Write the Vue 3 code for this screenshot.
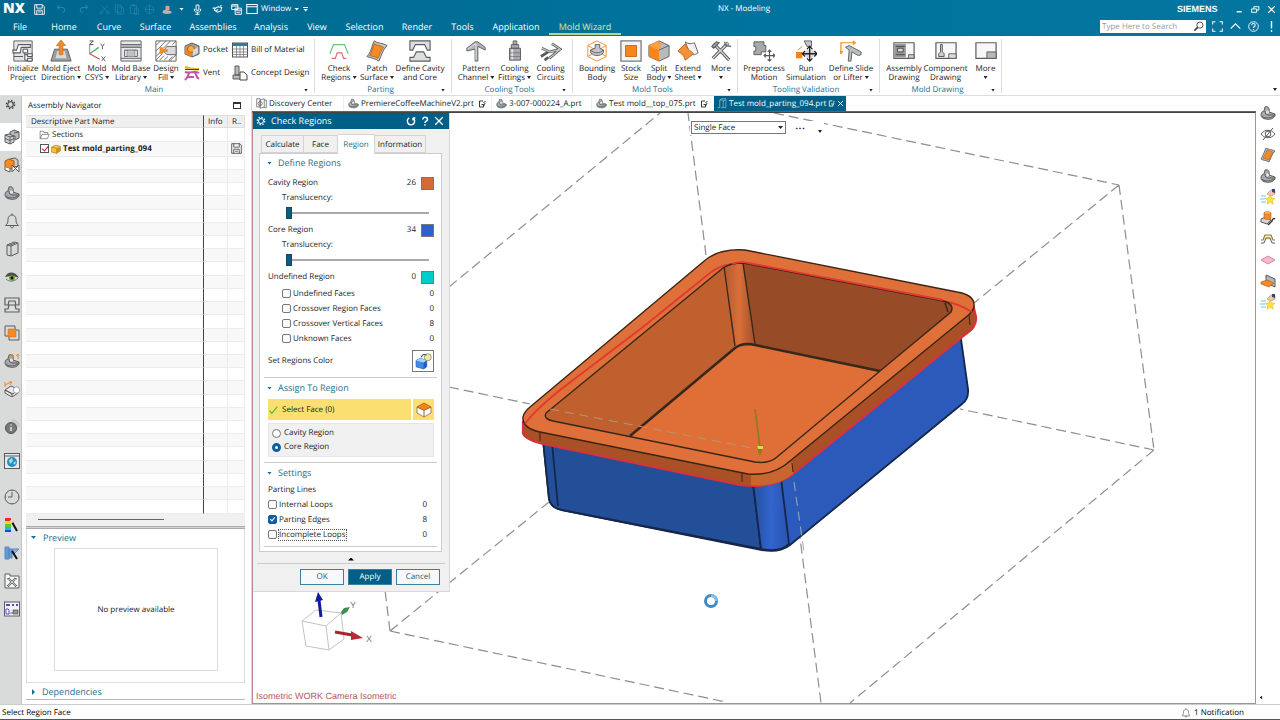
<script setup>
import { ref } from 'vue'

const G = '#5a5c5e'
const part = `<path d="M1 10c0-3 2-4 3-4l1-4c3-1 5 1 4 5l6 2v2c-2 3-6 4-9 3-3 0-5-2-5-4z" fill="#a9acae" stroke="${G}"/><path d="M5 6c0 3 1 4 4 4l6 0M2 11c2 2 7 3 12 0" fill="none" stroke="${G}"/><circle cx="7.500" cy="7" r="1.500" fill="#e8e8e8"/>`
const axes = `<path d="M8 6V1M14 6V1M6 3l2-2 2 2M12 3l2-2 1 2" stroke="#f08a24" fill="none"/>`
const star = `<path d="M1 7h5M0 10h5M1 13h5" stroke="#6cc4ea"/><path d="M7 5l4-4 4 1v3l-4 2z" fill="#f4c9a0" stroke="#a98466" stroke-width=".6"/><path d="M12 0h3v4l-3-1z" fill="#31448f"/><path d="M10 6l1.500 3 3.500.3-2.600 2.400.9 3.500-3.300-1.900-3 2 .7-3.600L5 9.300 8.600 9z" fill="#ffdf42" stroke="#d6b226" stroke-width=".5"/>`
const patch = `<path d="M6 1c3 2 6 1 9 3-3 3-4 7-6 11-3-2-5-1-8-3 2-3 3-7 5-11z" fill="#b9bbbd" stroke="${G}" stroke-width=".8"/><path d="M7 3c2 1 4 1 6 2-2 3-3 5-4 8-2-1-4-1-6-2 2-3 3-5 4-8z" fill="#f58a26" stroke="#b55f10" stroke-width=".6"/>`

const icons = {
  gear: `<circle cx="8" cy="8" r="4" fill="none" stroke="currentColor" stroke-width="1.600"/><circle cx="8" cy="8" r="6" fill="none" stroke="currentColor" stroke-width="2" stroke-dasharray="2.300 2.400"/>`,
  part, star, patch,
  asm: `<path d="M6 3l4-2 5 2v6l-4 2v-4l-5-1z" fill="#b9bbbd" stroke="${G}"/><path d="M1 6l4-1 5 2v6l-4 2-5-2z" fill="#cfd1d2" stroke="${G}"/><path d="M1 6l5 2 4-1M6 8v7M10 4l5-1M1 9.500l5 2 4-2" fill="none" stroke="${G}"/>`,
  constr: `<path d="M6 2l5-1 3 2v6l-4 1z" fill="#c9cbcd" stroke="${G}"/><path d="M1 4l4-2 5 2v6l-3 2-6-2z" fill="#f58a26" stroke="#a85c18"/><path d="M1 10v3l5 2v-3M8 8v7l7-7v7z" fill="#fff" stroke="${G}"/>`,
  bell: `<path d="M1.500 12.500c2-1.500 2.500-3 2.500-6C4 3.500 6 2 8 2s4 1.500 4 4.500c0 3 .5 4.500 2.500 6zM8 2V.5M6.500 13c0 2.500 3 2.500 3 0" fill="none" stroke="${G}"/>`,
  book: `<path d="M3 4l7-3 4 1v10l-7 3-4-1zM3 4l4 1v10M7 5l7-3M5 4.500l6-2.500" fill="#d6d8d9" stroke="${G}"/>`,
  eye: `<path d="M2 10c3-4 9-5 12-1-2 2-4 3-6 3-3 0-4 0-6-2z" fill="#d5dcc0"/><path d="M1 8c3-6 10-6 14 1-4-2-9-2-14-1z" fill="#4b5148"/><path d="M2 10c3 3 8 3 12-1" fill="none" stroke="#777"/><circle cx="8" cy="9" r="2.800" fill="#6f9a2c"/><circle cx="8" cy="9" r="1.400" fill="#111"/>`,
  mould: `<path d="M1 8V1h14v7h-3l-1-4H5L4 8zM1 15v-3h3l1-4h6l1 4h3v3z" fill="#dcdedf" stroke="${G}" stroke-width="1.200"/>`,
  squares: `<path d="M1 1h10v10H1zM5 5h10v10H5z" fill="none" stroke="${G}"/><path d="M4 4h8v8H4z" fill="#f58a26" stroke="#c76a14" stroke-width=".5"/>`,
  partAxes: part + axes,
  boxAxes: `<path d="M1 9l6-4 7 3-5 5zM1 9v3l7 4v-3zM8 16l6-4V8" fill="#e9eaeb" stroke="${G}"/><circle cx="12.500" cy="9" r="3.200" fill="#fff" stroke="#777" stroke-width=".6"/><path d="M1 6V1M1 4l6-3M6 4l2-3-3 0" fill="none" stroke="#f08a24"/>`,
  info: `<circle cx="7" cy="9" r="5.500" fill="#77797b" stroke="#505254"/><path d="M7 8v4M7 5.500v1" stroke="#eee" stroke-width="1.400"/><path d="M8 1c4 0 7 3 7 7M8 3c3 0 5 2 5 4" fill="none" stroke="#aaa" stroke-width=".7"/>`,
  web: `<rect x=".5" y=".5" width="15" height="15" fill="#e6e8e9" stroke="${G}"/><path d="M.5 3h15" stroke="${G}"/><circle cx="8" cy="9" r="5" fill="#2490bd"/><path d="M5 7l3-2 1 3-3 3zM9 10l3-2-1 4z" fill="#a9dcee"/>`,
  clock: `<circle cx="8" cy="8" r="7" fill="none" stroke="${G}"/><path d="M8 3v5H4M8 1v1M8 14v1M1 8h1M14 8h1" fill="none" stroke="${G}"/>`,
  spectrum: `<path d="M1 1h6v3H1z" fill="#ee2b1d"/><path d="M1 4h6v3H1z" fill="#f7d417"/><path d="M1 7h6v3H1z" fill="#49d33a"/><path d="M1 10h6v3H1z" fill="#21b9dd"/><path d="M1 13h6v2H1z" fill="#2146d5"/><path d="M8 5l5 9" stroke="#111" stroke-width="2"/><path d="M7 3l1 3" stroke="#ddd" stroke-width="2"/>`,
  curves: `<path d="M1 2h4v12H1zM5 4h3v9H5z" fill="#5f9bd8" stroke="#5b89bd"/><path d="M8 4h7l-5 5z" fill="#81b6ea" stroke="#5b89bd"/><path d="M8 6l5 8" stroke="#111" stroke-width="2"/>`,
  toolbox: `<path d="M1 3V1h5v2h9v12H1z" fill="#f7f7f7" stroke="${G}"/><path d="M5 6l7 7M11 6l-7 7" stroke="${G}" stroke-width="2"/><path d="M5 6l7 7M11 6l-7 7" stroke="#fff" stroke-width=".7"/><path d="M3 6l3-1M10 5l3 1M3 12l2 2M11 14l2-2" stroke="${G}"/>`,
  flow: `<rect x=".5" y="1" width="15" height="14" fill="#f3f4fb" stroke="${G}"/><path d="M2 3h4v2H2zM8 3h2v2H8zM12 3h2v2h-2z" fill="#4c51bd"/><path d="M2 8h2l1 1v4H2z" fill="#fff" stroke="#4c51bd"/><path d="M9 9h5v4H9zM6 12h3" fill="#999" stroke="#444" stroke-width=".7"/>`,
  eyeOff: `<path d="M1 8c4-5 10-5 14 0-4 5-10 5-14 0z" fill="none" stroke="${G}"/><circle cx="8" cy="8" r="2.800" fill="none" stroke="${G}"/><path d="M3 14L13 2" stroke="${G}"/>`,
  cylTool: `<path d="M1 9l5-2 5 3-4 4-6-2z" fill="#d2d4d6" stroke="${G}"/><path d="M4 3v5c1 2 6 2 7 0V3z" fill="#f58a26" stroke="#a85c18" stroke-width=".6"/><ellipse cx="7.500" cy="3" rx="3.500" ry="1.500" fill="#ffb25c" stroke="#a85c18" stroke-width=".5"/><path d="M8 15l4-4c0-2 2-3 3-2" fill="none" stroke="#333" stroke-width="1.500"/>`,
  lines: `<path d="M4 4h8v5H4z" fill="#f7efb5"/><path d="M1 9h2l2-5h6l2 5h2" fill="none" stroke="#8e8034" stroke-width="1.200"/><path d="M1 12h3l2-5h4l2 5h3" fill="none" stroke="${G}"/>`,
  diamond: `<path d="M1 8l7-4 7 4-7 4z" fill="#f7b7d1" stroke="#d982a6"/>`,
  slab: `<path d="M6 2l9 4v8l-9-4z" fill="#b2b5b8" stroke="${G}"/><path d="M1 9l6-2 7 3-5 4-8-3z" fill="#f58a26" stroke="#a85c18" stroke-width=".6"/>`,
  save: `<path d="M1 1h11l3 3v11H1zM4 1v5h8V1M4 15V9h8v6M6 11.500h4" fill="none" stroke="currentColor" stroke-width="1.300"/>`,
  undo: `<path d="M5 2L2 5l3 3M2 5h7c5 0 5 7 0 7" fill="none" stroke="currentColor" stroke-width="1.500"/>`,
  redo: `<path d="M11 2l3 3-3 3M14 5H7c-5 0-5 7 0 7" fill="none" stroke="currentColor" stroke-width="1.500"/>`,
  cut: `<path d="M3 2l9 9M13 2L4 11" stroke="currentColor"/><circle cx="3" cy="12.500" r="2" fill="none" stroke="currentColor"/><circle cx="13" cy="12.500" r="2" fill="none" stroke="currentColor"/>`,
  copy: `<path d="M2 1h6l3 3v8H2zM5 4h6l3 3v8H5z" fill="none" stroke="currentColor"/>`,
  paste: `<path d="M2 2h9v12H2zM5 1h3v2H5zM8 7h6v8H8z" fill="none" stroke="currentColor"/>`,
  target: `<circle cx="8" cy="8" r="6" fill="none" stroke="currentColor"/><path d="M8 1v14M1 8h14" stroke="currentColor"/>`,
  cap: `<path d="M5 9V4c1-2 5-2 6 0v5z" fill="#d9a08c"/><path d="M1 11c0-2 3-3 7-2l6 2v2c-5 2-9 2-13 0z" fill="#b9b3b2"/>`,
  mic: `<path d="M6 1.500h4V9H6zM3.500 7v2c0 4 9 4 9 0V7M8 12v3M5 15h6" fill="none" stroke="currentColor" stroke-width="1.400"/>`,
  touch: `<path d="M1 6h5M3 10l2-4 4-2 5 1-1 5-5 2-3-2 4-2M12 3l2-1" fill="none" stroke="currentColor" stroke-width="1.500"/>`,
  cascade: `<path d="M1 1h9v7H1zM1 3h9M6 6h9v9H6zM6 9h9M8 12h5" fill="none" stroke="currentColor" stroke-width="1.400"/>`,
  win: `<path d="M1 2h14v12H1zM1 5h14" fill="none" stroke="currentColor" stroke-width="1.400"/>`,
  min: `<path d="M3 12h9" stroke="currentColor" stroke-width="2.500"/>`,
  restore: `<path d="M1 7h9v6H1zM5 7V3h9v6h-4" fill="none" stroke="currentColor" stroke-width="1.700"/>`,
  close: `<path d="M2 2l12 12M14 2L2 14" stroke="currentColor" stroke-width="2.200"/>`,
  search: `<circle cx="10" cy="6" r="4.500" fill="none" stroke="#444" stroke-width="1.300"/><path d="M7 9l-5 5" stroke="#444" stroke-width="2.400"/>`,
  frame: `<path d="M1 5V1h4M11 1h4v4M15 11v4h-4M5 15H1v-4" fill="none" stroke="currentColor" stroke-width="1.500"/>`,
  up: `<path d="M1 11l7-7 7 7" fill="none" stroke="currentColor" stroke-width="1.600"/>`,
  help: `<circle cx="8" cy="8" r="7" fill="none" stroke="currentColor" stroke-width="1.300"/><path d="M5.500 6c0-3 5-3 5 0 0 2-2.500 2-2.500 4M8 11.500v1.500" fill="none" stroke="currentColor" stroke-width="1.500"/>`,
  bang: `<path d="M8 0v11M8 13v3" stroke="currentColor" stroke-width="2"/>`,
  reset: `<path d="M5 3C0 6 2 14 8 14s8-8 3-11M11 3h4M11 3v4" fill="none" stroke="currentColor" stroke-width="2"/>`,
  quest: `<path d="M4.500 5.500c0-5 7.500-4 7.500 0 0 3-4 2.500-4 5.500M8 13v2.500" fill="none" stroke="currentColor" stroke-width="2.400"/>`,
  note: `<path d="M10 2H3v12h8v-3M7 9h3c3 0 4-1 4-3M11 5l4-2M14 9l-4 3" fill="none" stroke="currentColor" stroke-width="1.800"/>`,
  doc: `<path d="M1 1h5v12H1zM6 3l6-2v12l-6 2zM12 3h3v11h-4" fill="none" stroke="#555"/><circle cx="6" cy="8" r="3" fill="none" stroke="#555"/>`,
  mouldDoc: `<path d="M1 14h3V3h5v11H6M9 5l4-3v12H9M4 3l3-2h6" fill="none" stroke="#9fc6d8"/>`,
  folder: `<path d="M1 14V2h5l1 2h6v3M1 14l3-7h11.500l-3 7z" fill="#fff" stroke="#555"/>`,
  cube: `<path d="M1 5l6-3 8 2v7l-6 4-8-2z" fill="#f7c437" stroke="#a27a12"/><path d="M1 5l8 2v8" fill="none" stroke="#a27a12"/><path d="M9 7l6-3v7l-6 4z" fill="#d0941b"/>`,
  disk: `<path d="M1 1h12l2 2v12H1zM4 1v5h8V1M4 15V9h8v6M6 12h4" fill="none" stroke="#444" stroke-width="1.200"/>`,
  tick: `<path d="M1 9l4 5L15 2" fill="none" stroke="#4ebb22" stroke-width="2"/>`,
  paint: `<path d="M1 7l4-2 6 2v6l-3 2-7-2z" fill="#3f8be8" stroke="#1d55b6" stroke-width=".6"/><path d="M8 9l3-2v6l-3 2z" fill="#1f5fc4"/><path d="M1 7l4-2 6 2-3 2z" fill="#a6d2fb"/><circle cx="12" cy="4" r="3.300" fill="#f1e8a8" stroke="#868655" stroke-width=".7"/><path d="M6 4c1-3 3-3 5-2" fill="none" stroke="#23518f"/>`,
  faceBox: `<path d="M1 5l7 3 7-3v6l-7 4-7-4z" fill="#fff" stroke="#8b6a4a" stroke-width=".8"/><path d="M1 5l7-4 7 4-7 3.500z" fill="#f5821f" stroke="#a8540c" stroke-width=".7"/><path d="M8 8.500V15" stroke="#8b6a4a"/>`,
  pocket: `<path d="M1 4l7-3 7 3v8l-7 3-7-3z" fill="#a1a3a5" stroke="${G}"/><path d="M1 4l7 3v8l-7-3z" fill="#ef8422"/><circle cx="7" cy="7" r="3.500" fill="#ffa74a" stroke="#b66718"/><path d="M9 8l5-3v6l-5 3z" fill="#d5d7d8"/>`,
  vent: `<path d="M1 2c5 2 8 3 14 2" stroke="#e8b62c" stroke-width="2.500" fill="none"/><path d="M1 7c5 2 9-2 14 1M5 8c-1 3-1 4-4 7M11 7c1 3 1 5 4 7M3 12h7" stroke="#c4559f" stroke-width="2" fill="none"/><path d="M1 4.500h14" stroke="#444"/>`,
  bom: `<rect x=".5" y="1" width="15" height="14" fill="#fff" stroke="#555"/><path d="M1 1h14v3H1z" fill="#287fa2"/><path d="M1 7h14M1 10h14M1 12.500h14M4.500 4v11M8 4v11M11.500 4v11" stroke="#777" stroke-width=".8"/>`,
  concept: `<path d="M3 1h4v9H3zM1 10h8v4H1z" fill="#b9bbbd" stroke="${G}"/><path d="M8 7h4l3 3v5H8z" fill="#fff" stroke="#444"/>`,
  init: `<path d="M2 1h20v22H2z" fill="#e3e5e6" stroke="${G}"/><path d="M1 11h4l2-6h13v3H10l-1 6H1zM2 18h10" fill="#fff" stroke="${G}" stroke-width="1.200"/><path d="M12 10h5v4h-5zM17 15h5v3h-5zM17 20h5v3h-5zM14 14v8h3M14 16h3" fill="#fff" stroke="#444"/>`,
  eject: `<path d="M5 10h14l4 13H1z" fill="#9b9d9f" stroke="${G}"/><path d="M8 12h8l2 8H6z" fill="#d7d9da"/><path d="M12 0l5 6h-3v10h-4V6H7z" fill="#f58a26" stroke="#b96613" stroke-width=".7"/>`,
  csys: `<path d="M4 15V4" stroke="#888"/><path d="M4 15l10-7" stroke="#55ad63" stroke-width="1.500"/><path d="M4 15l11 6" stroke="#d94a5b" stroke-width="1.500"/><path d="M4 1h4l-4 4h4" fill="none" stroke="#444"/><path d="M16 4l2 3 2-3M18 7v3M17 18l4 5M21 18l-4 5" fill="none" stroke="#555"/>`,
  base: `<path d="M1 1h22v22H1z" fill="#e6e8e9" stroke="${G}"/><path d="M1 5h22v3H1z" fill="#b8babc"/><path d="M1 5h22M1 8h22M1 20h22M5 11h14v7H5z" fill="none" stroke="${G}"/><path d="M8 11v7M16 11v7" stroke="${G}"/><path d="M8 12h8v6H8z" fill="#bfc1c3"/>`,
  fill: `<path d="M1 1h22v22H1z" fill="#fff" stroke="${G}"/><path d="M1 6l5-5M1 12L12 1M9 9l8-8M1 18l6-6M1 22l7-7M5 22l5-5M10 22l4-4M15 22l4-4M19 5l4-4M16 23l7-7" stroke="#666"/><path d="M13 7h10v9H13l-4-4z" fill="#d8dadb" stroke="${G}"/><path d="M5 8h3l2 2h4v3h-4l-2 2H5z" fill="#f58a26"/>`,
  check: `<path d="M2 15l4-10h12l4 10" fill="none" stroke="#63c878" stroke-width="1.300"/><path d="M4 20h4l2-6h5l2 6h3" fill="none" stroke="#e06b72" stroke-width="1.300"/>`,
  patch2: `<path d="M9 1c4 3 9 2 14 5-5 5-6 11-9 17-4-3-8-3-13-5 5-5 5-11 8-17z" fill="#c5c7c9" stroke="${G}"/><path d="M9 4c3 2 7 2 10 4-3 4-4 8-6 12-3-2-6-2-9-3 3-4 3-9 5-13z" fill="#f58a26" stroke="#b96613"/>`,
  core: `<path d="M1 11V1h22v10h-3l-3-6H7l-3 6zM1 23v-4h4l3-6h8l3 6h4v4z" fill="#dcdedf" stroke="${G}" stroke-width="1.200"/>`,
  channel: `<path d="M11 23V10L2 12V9l9-7h3l8 6v3l-8-4v16z" fill="#b1b4b6" stroke="${G}"/><path d="M3 10l9-6v18" fill="none" stroke="#e5e6e7"/>`,
  fitting: `<path d="M10 1h4v4h-4zM8 5h8v4H8zM6 9h12v13H6z" fill="#a8abad" stroke="${G}"/><path d="M9 10v11" stroke="#e6e7e8" stroke-width="2"/><path d="M6 14h12M6 18h12" stroke="${G}" stroke-width=".6"/>`,
  circuit: `<path d="M2 9l9 4 11-3-9-6M10 20l12-10M1 18l8-5M5 22l4-3" fill="none" stroke="${G}" stroke-width="3"/><path d="M2 9l9 4 11-3-9-6M10 20l12-10" fill="none" stroke="#d5d6d7" stroke-width="1.200"/>`,
  bound: `<path d="M12 1l10 5v12l-10 5-10-5V6zM2 6l20 12M22 6L2 18" fill="none" stroke="#f08a24"/><path d="M5 11l5-2V5h5v4l4 2v3c-4 4-10 4-14 0z" fill="#c4c6c8" stroke="${G}"/><path d="M5 11c4 4 10 4 14 0" fill="none" stroke="${G}"/>`,
  stock: `<path d="M1 1h22v22H1z" fill="#f4f4f4" stroke="#77797b" stroke-width="1.400"/><path d="M6 6h12v12H6z" fill="#f5861f" stroke="#c86a10"/>`,
  split: `<path d="M1 6l11-5 11 5v12l-11 5-11-5z" fill="#b8babc" stroke="${G}"/><path d="M1 6l11 5v12L1 18z" fill="#f5861f"/><path d="M1 6l9-5 5 2-3 8z" fill="#ff9f42"/><path d="M12 11l11-5" stroke="${G}"/>`,
  extend: `<path d="M9 2c4 3 7 2 10 1l4 11c-4 3-6 2-9 1z" fill="#f4f4f4" stroke="${G}"/><path d="M9 4L1 12c3 3 6 3 8 10l9-7c-3-4-6-3-9-11z" fill="#f5903a" stroke="#b96613"/>`,
  tools: `<path d="M4 4l17 18M20 3L3 20" stroke="${G}" stroke-width="3.500"/><path d="M4 4l17 18M20 3L3 20" stroke="#dfe0e1" stroke-width="1.400"/><path d="M2 7l5-5 3 1-6 6zM16 2c0 5 3 5 7 5" fill="#aaa" stroke="${G}" stroke-width="1.200"/>`,
  motion: `<path d="M1 2h11v4h2v7H9v3H1v-4h2V7H1z" fill="#a7a9ab" stroke="${G}"/><path d="M18 11v12M12 17h12M16 13l2-2 2 2M16 21l2 2 2-2M14 15l-2 2 2 2M22 15l2 2-2 2" fill="none" stroke="#555" stroke-width="1.200"/>`,
  sim: `<path d="M10 1h8v6h-5z" fill="#c4c6c8" stroke="${G}"/><path d="M1 13h7v7H1z" fill="#f5861f"/><path d="M3 11l5-4" stroke="#f5861f"/><circle cx="16" cy="15" r="5" fill="#d6d7d8"/><path d="M16 8v15M9 15h15M13 10l3-3 3 3M13 20l3 3 3-3M11 12l-3 3 3 3M21 12l3 3-3 3" fill="none" stroke="#222" stroke-width="1.400"/>`,
  slide: `<path d="M1 15V3h16M1 15l-1-3M1 15l2-3M17 3l-3-2M17 3l-3 2" fill="none" stroke="#f08a24" stroke-width="1.300"/><path d="M6 8l4-2 13 7v3l-3 1-7-4-1 10H9l1-12z" fill="#bbbdbf" stroke="${G}"/>`,
  asmDraw: `<path d="M1 3h22v17H1z" fill="#f7f7f7" stroke="${G}" stroke-width="1.300"/><path d="M2 4h12v15H2z" fill="#96989a"/><path d="M3 7h10M3 16h10M5 9h6v4H5z" fill="#ddd" stroke="#444"/><path d="M17 16h6v4h-6z" fill="#ccc" stroke="${G}"/>`,
  compDraw: `<path d="M1 3h22v17H1z" fill="#f7f7f7" stroke="${G}" stroke-width="1.300"/><path d="M6 5h2v8l2 2v3H4v-3l2-2z" fill="#ccc" stroke="#555"/><path d="M15 15h8v5h-8z" fill="#ddd" stroke="${G}"/>`,
  moreDraw: `<path d="M1 3h22v17H1z" fill="#f7f7f7" stroke="${G}" stroke-width="1.300"/><path d="M13 13h10v7H13z" fill="#b5b7b9" stroke="${G}"/>`
}

const menu = ['File', 'Home', 'Curve', 'Surface', 'Assemblies', 'Analysis', 'View', 'Selection', 'Render', 'Tools', 'Application', 'Mold Wizard']
const quick = ['undo', 'redo', 'cut', 'copy', 'paste', 'target']

const groups = [
  { id: 'main', title: 'Main', items: [['init', 'Initialize', 'Project'], ['eject', 'Mold Eject', 'Direction', 1], ['csys', 'Mold', 'CSYS', 1], ['base', 'Mold Base', 'Library', 1], ['fill', 'Design', 'Fill', 1]] },
  { id: 'parting', title: 'Parting', items: [['check', 'Check', 'Regions', 1], ['patch2', 'Patch', 'Surface', 1], ['core', 'Define Cavity', 'and Core']] },
  { id: 'cooling', title: 'Cooling Tools', items: [['channel', 'Pattern', 'Channel', 1], ['fitting', 'Cooling', 'Fittings', 1], ['circuit', 'Cooling', 'Circuits']] },
  { id: 'tools', title: 'Mold Tools', items: [['bound', 'Bounding', 'Body'], ['stock', 'Stock', 'Size'], ['split', 'Split', 'Body', 1], ['extend', 'Extend', 'Sheet', 1], ['tools', 'More', '', 1]] },
  { id: 'valid', title: 'Tooling Validation', items: [['motion', 'Preprocess', 'Motion'], ['sim', 'Run', 'Simulation'], ['slide', 'Define Slide', 'or Lifter', 1]] },
  { id: 'draw', title: 'Mold Drawing', items: [['asmDraw', 'Assembly', 'Drawing'], ['compDraw', 'Component', 'Drawing'], ['moreDraw', 'More', '', 1]] }
]

const sideA = ['asm', 'constr', 'part', 'bell', 'book', 'eye', 'mould', 'squares', 'partAxes', 'boxAxes']
const sideB = ['info', 'web', 'clock']
const sideC = ['spectrum', 'curves', 'toolbox', 'flow']
const rightIcons = ['part', 'eyeOff', 'patch', 'part', 'star', 'cylTool', 'lines', 'diamond', 'slab', 'star']

const docs = [
  { t: 'Discovery Center', i: 'doc' },
  { t: 'PremiereCoffeeMachineV2.prt', i: 'part', n: 1 },
  { t: '3-007-000224_A.prt', i: 'part' },
  { t: 'Test mold__top_075.prt', i: 'part', n: 1 },
  { t: 'Test mold_parting_094.prt', i: 'mouldDoc', n: 1, active: 1 }
]

const regions = ref([
  { name: 'Cavity Region', n: 26, c: 'cavity', v: 0 },
  { name: 'Core Region', n: 34, c: 'corec', v: 0 }
])
const faces = ref([
  { t: 'Undefined Faces', n: 0, on: false },
  { t: 'Crossover Region Faces', n: 0, on: false },
  { t: 'Crossover Vertical Faces', n: 8, on: false },
  { t: 'Unknown Faces', n: 0, on: false }
])
const loops = ref([
  { t: 'Internal Loops', n: 0, on: false },
  { t: 'Parting Edges', n: 8, on: true },
  { t: 'Incomplete Loops', n: 0, on: false, focus: true }
])
const assign = ref('core')
const tabs = ['Calculate', 'Face', 'Region', 'Information']
</script>

<template>
  <div class="app">
    <header class="top">
      <div class="titlebar">
        <div class="quick">
          <strong class="nx">NX</strong>
          <button class="qb" aria-label="Save"><svg viewBox="0 0 16 16" v-html="icons.save"></svg></button>
          <button v-for="q in quick" :key="q" class="qb dim" :class="q" :aria-label="q"><svg viewBox="0 0 16 16" v-html="icons[q]"></svg></button>
          <button class="qb cap" aria-label="Command"><svg viewBox="0 0 16 16" v-html="icons.cap"></svg></button>
          <i class="tri"></i>
          <button class="qb mic" aria-label="Voice"><svg viewBox="0 0 16 16" v-html="icons.mic"></svg></button>
          <button class="qb touch" aria-label="Touch"><svg viewBox="0 0 16 16" v-html="icons.touch"></svg></button>
          <button class="qb" aria-label="Switch"><svg viewBox="0 0 16 16" v-html="icons.cascade"></svg></button>
          <button class="winbtn"><svg viewBox="0 0 16 16" v-html="icons.win"></svg>Window <i class="tri"></i></button>
          <span class="over"><i class="tri"></i></span>
        </div>
        <div class="wintitle">NX - Modeling</div>
        <div class="winctl">
          <strong>SIEMENS</strong>
          <button aria-label="Minimize"><svg viewBox="0 0 16 16" v-html="icons.min"></svg></button>
          <button aria-label="Restore"><svg viewBox="0 0 16 16" v-html="icons.restore"></svg></button>
          <button aria-label="Close"><svg viewBox="0 0 16 16" v-html="icons.close"></svg></button>
        </div>
      </div>
      <div class="menurow">
        <nav class="menu">
          <button v-for="m in menu" :key="m" :class="{ active: m === 'Mold Wizard' }">{{ m }}</button>
        </nav>
        <div class="searchrow">
          <div class="search"><input type="text" placeholder="Type Here to Search" aria-label="Search"><svg viewBox="0 0 16 16" v-html="icons.search"></svg></div>
          <button v-for="k in ['frame', 'up', 'help', 'bang']" :key="k" :aria-label="k"><svg viewBox="0 0 16 16" v-html="icons[k]"></svg></button>
        </div>
      </div>
    </header>

    <section class="ribbon">
      <div v-for="g in groups" :key="g.id" class="group" :class="g.id">
        <div class="items">
          <button v-for="b in g.items" :key="b[0]" class="big">
            <svg viewBox="0 0 24 24" v-html="icons[b[0]]"></svg>
            <span>{{ b[1] }}</span>
            <span v-if="b[2] || b[3]">{{ b[2] }}<i v-if="b[3]" class="tri"></i></span>
          </button>
          <div v-if="g.id === 'main'" class="smalls">
            <button><svg viewBox="0 0 16 16" v-html="icons.pocket"></svg>Pocket</button>
            <button><svg viewBox="0 0 16 16" v-html="icons.bom"></svg>Bill of Material</button>
            <button><svg viewBox="0 0 16 16" v-html="icons.vent"></svg>Vent</button>
            <button><svg viewBox="0 0 16 16" v-html="icons.concept"></svg>Concept Design</button>
          </div>
        </div>
        <div class="gtitle"><span>{{ g.title }}</span><i class="tri"></i></div>
      </div>
      <i class="tri ribend"></i>
    </section>

    <div class="work">
      <aside class="side">
        <button class="gearbtn" aria-label="Options"><svg viewBox="0 0 16 16" v-html="icons.gear"></svg></button>
        <button v-for="(s, k) in sideA" :key="s" :class="{ on: k === 0 }" :aria-label="s"><svg viewBox="0 0 16 16" v-html="icons[s]"></svg></button>
        <button v-for="s in sideB" :key="s" :class="s" :aria-label="s"><svg viewBox="0 0 16 16" v-html="icons[s]"></svg></button>
        <button v-for="s in sideC" :key="s" :aria-label="s"><svg viewBox="0 0 16 16" v-html="icons[s]"></svg></button>
      </aside>

      <section class="navigator">
        <div class="navhead">Assembly Navigator<button aria-label="Maximize"></button></div>
        <div class="tablewrap">
          <table>
            <thead><tr><th>Descriptive Part Name</th><th class="c2">Info</th><th class="c3">R..</th></tr></thead>
            <tbody>
              <tr><td><div class="cell l1"><svg viewBox="0 0 16 16" v-html="icons.folder"></svg>Sections</div></td><td></td><td></td></tr>
              <tr><td><div class="cell l2"><input type="checkbox" checked aria-label="Test mold_parting_094"><svg viewBox="0 0 16 16" v-html="icons.cube"></svg><b>Test mold_parting_094</b></div></td><td></td><td><svg class="disk" viewBox="0 0 16 16" v-html="icons.disk"></svg></td></tr>
              <tr v-for="r in 27" :key="r"><td></td><td></td><td></td></tr>
            </tbody>
          </table>
        </div>
        <div class="hscroll"><span></span></div>
        <div class="splitter"></div>
        <div class="preview">
          <h3><i class="tri"></i>Preview</h3>
          <div class="pbox">No preview available</div>
        </div>
        <h3 class="deps"><i class="tri right"></i>Dependencies</h3>
      </section>

      <main class="center">
        <nav class="docs">
          <button v-for="d in docs" :key="d.t" :class="{ active: d.active }">
            <svg viewBox="0 0 16 16" v-html="icons[d.i]"></svg><span>{{ d.t }}</span>
            <svg v-if="d.n" class="sm" viewBox="0 0 16 16" v-html="icons.note"></svg>
            <svg v-if="d.active" class="sm" viewBox="0 0 16 16" v-html="icons.close"></svg>
          </button>
        </nav>
        <div class="viewport">
          <svg class="scene" viewBox="253 113 1002 589" preserveAspectRatio="xMinYMin meet">
            <defs>
              <linearGradient id="pil" x1="0" x2="1"><stop offset="0" stop-color="#b2592e" /><stop offset=".5" stop-color="#d96f3a" /><stop offset="1" stop-color="#a04f29" /></linearGradient>
              <linearGradient id="bp" x1="0" x2="1"><stop offset="0" stop-color="#234f9c" /><stop offset=".5" stop-color="#3264cc" /><stop offset="1" stop-color="#2855b0" /></linearGradient>
            </defs>
            <g fill="none" stroke="#8d8d92" stroke-width="1.200" stroke-dasharray="10 5">
              <path d="M390 631L385 590M390 631L726 702M390 631L549 502M449 287L660 113M706 255L688 113M774 113L1119 185M1119 185L974 303M1119 185L1154 450M1154 450L960 409M1154 450L850 703M449 387L530 404M780 380L821 703" />
            </g>
            <g stroke="#16264a" stroke-width="1.800" stroke-linejoin="round">
              <path d="M543 440L549 499Q551 508 562 510L762 550Q780 553 790 545L962 404Q969 399 968 389L960 332L780 460Z" fill="#2b5abb" />
              <path d="M543 440L549 499Q551 508 562 510L761 549L752 475Z" fill="#234f98" />
              <path d="M752 475L761 549Q780 553 789 544L780 470Z" fill="url(#bp)" />
              <path d="M552 443L558 506" fill="none" />
            </g>
            <path d="M523 422V433Q524 439 543 444L740 485Q775 489 793 474L966 334Q977 327 976 317L973 304L780 440Z" fill="#a95027" stroke="#d93239" stroke-width="2.200" />
            <path d="M751 473V485Q775 488 793 474V462Z" fill="#c9652f" />
            <path d="M540 432V441M742 472V482M792 463L793 472M969 315L970 325" stroke="#3a2415" fill="none" />
            <path d="M530 407L703 262Q718 248 745 250L957 292Q975 295 974 306Q974 311 966 317L790 461Q774 476 748 474L540 432Q522 428 523 417Q524 412 530 407Z" fill="#e0703a" stroke="#3a2415" stroke-width="1.400" />
            <path d="M525 424Q532 413 560 390L643 327L710 273Q722 263 745 263L943 301Q960 304 972 312" fill="none" stroke="#e0392f" stroke-width="1.800" />
            <path d="M546 413L723 268Q730 263 743 263L943 301Q955 304 951 312L880 371L777 457Q769 464 755 462L553 421Q543 419 546 413Z" fill="#df6f37" />
            <path d="M546 413L723 268L735 347L630 436L553 421Q543 419 546 413Z" fill="#c1602f" />
            <path d="M743 263L943 301Q955 304 951 312L880 371L755 345Z" fill="#984b27" />
            <path d="M724 267Q733 263 743 263L755 345L735 348Z" fill="url(#pil)" />
            <g fill="none" stroke="#38271b" stroke-width="1.400">
              <path d="M546 413L723 268Q730 263 743 263L943 301Q955 304 951 312L880 371L777 457Q769 464 755 462L553 421Q543 419 546 413Z" />
              <path d="M724 267L735 346M743 263L755 344M945 303L948 312" />
              <path d="M630 436L735 348Q743 342 755 345L880 371" stroke-width="2.600" />
            </g>
            <path d="M732 264Q740 261 748 263L943 300" fill="none" stroke="#e0392f" stroke-width="1.800" />
            <path d="M550 409L757 449" stroke="#b89576" stroke-dasharray="9 6" fill="none" />
            <path d="M794 482L804 552" stroke="#9aa8c9" stroke-dasharray="9 6" fill="none" />
            <path d="M755 409L760 447" stroke="#8b7b1c" stroke-width="1.500" /><path d="M756 446l8-1-4 11z" fill="#8b7b1c" /><path d="M757 446h6v3h-5z" fill="#e8d44b" />
            <g fill="none" stroke="#c3c3c3"><path d="M302 621L326 626L329 650L306 646ZM302 621L316 610L341 613L326 626M341 613L344 639L329 650" /></g>
            <path d="M321 617L319 600" stroke="#101c9d" stroke-width="3" /><path d="M315 602L318 592L323 600Z" fill="#101c9d" />
            <path d="M335 632L352 635" stroke="#a8232f" stroke-width="3" /><path d="M351 631L363 638L351 640Z" fill="#b72a37" />
            <path d="M341 612l3-4 6-1-3 5-5 3z" fill="#3c9150" />
            <text x="350" y="608" class="ax">Y</text><text x="366" y="642" class="ax">X</text>
            <circle cx="711" cy="601" r="5.500" fill="#fff" stroke="#3f8ac6" stroke-width="3" />
            <path d="M711 595.500A5.500 5.500 0 0 1 716.500 601" fill="none" stroke="#82bde6" stroke-width="3" />
          </svg>

          <div class="selbar">
            <select aria-label="Selection scope"><option>Single Face</option></select>
            <i class="tri"></i><button aria-label="More options">···</button><i class="tri out"></i>
          </div>
          <div class="camera">Isometric WORK Camera Isometric</div>

          <form class="dialog" @submit.prevent>
            <div class="dtitle">
              <svg viewBox="0 0 16 16" v-html="icons.gear"></svg><span>Check Regions</span>
              <button v-for="k in ['reset', 'quest', 'close']" :key="k" type="button" :aria-label="k"><svg viewBox="0 0 16 16" v-html="icons[k]"></svg></button>
            </div>
            <div class="dtabs"><button v-for="t in tabs" :key="t" type="button" :class="{ active: t === 'Region' }">{{ t }}</button></div>
            <div class="dbody">
              <h3><i class="tri"></i>Define Regions</h3>
              <div class="define">
                <div v-for="r in regions" :key="r.name">
                  <div class="rrow"><span>{{ r.name }}</span><span class="num">{{ r.n }}</span><button type="button" class="sw" :class="r.c" :aria-label="r.name + ' colour'"></button></div>
                  <label class="trans"><span>Translucency:</span><input v-model="r.v" type="range" min="0" max="100"></label>
                </div>
                <div class="rrow"><span>Undefined Region</span><span class="num">0</span><button type="button" class="sw undef" aria-label="Undefined Region colour"></button></div>
                <div class="faces">
                  <div v-for="f in faces" :key="f.t" class="crow"><label><input v-model="f.on" type="checkbox">{{ f.t }}</label><span>{{ f.n }}</span></div>
                </div>
                <div class="setcolor"><span>Set Regions Color</span><button type="button" aria-label="Set Regions Color"><svg viewBox="0 0 16 16" v-html="icons.paint"></svg></button></div>
              </div>
              <h3 class="ruled"><i class="tri"></i>Assign To Region</h3>
              <div class="assign">
                <div class="selface"><button type="button" class="sf"><svg viewBox="0 0 16 16" v-html="icons.tick"></svg>Select Face (0)</button><button type="button" class="fb" aria-label="Face rule"><svg viewBox="0 0 16 16" v-html="icons.faceBox"></svg></button></div>
                <div class="radios">
                  <label><input v-model="assign" type="radio" value="cavity">Cavity Region</label>
                  <label><input v-model="assign" type="radio" value="core">Core Region</label>
                </div>
              </div>
              <h3 class="ruled"><i class="tri"></i>Settings</h3>
              <div class="settings">
                <div class="plabel">Parting Lines</div>
                <div v-for="f in loops" :key="f.t" class="crow"><label><input v-model="f.on" type="checkbox"><span :class="{ focus: f.focus }">{{ f.t }}</span></label><span>{{ f.n }}</span></div>
              </div>
            </div>
            <div class="collapse"><i class="tri upw"></i></div>
            <div class="dfoot"><button type="button">OK</button><button type="submit" class="primary">Apply</button><button type="button">Cancel</button></div>
          </form>
        </div>
      </main>

      <aside class="right">
        <button v-for="(s, k) in rightIcons" :key="k" :aria-label="s + k"><svg viewBox="0 0 16 16" v-html="icons[s]"></svg></button>
        <i class="tri"></i>
      </aside>
    </div>

    <footer class="status">
      <span>Select Region Face</span>
      <button><svg viewBox="0 0 16 16" v-html="icons.bell"></svg>1 Notification</button>
    </footer>
  </div>
</template>

<style>
body { margin: 0; background: #fff; }
</style>

<style scoped>
.app { height: 100vh; display: flex; flex-direction: column; overflow: hidden; font: 8px/10px "Open Sans", "Noto Sans", sans-serif; color: #222; text-rendering: geometricPrecision; }
.app * { box-sizing: border-box; }
button { font: inherit; color: inherit; background: none; border: 0; padding: 0; margin: 0; display: flex; align-items: center; justify-content: center; white-space: nowrap; text-rendering: inherit; }
input, select { font: inherit; color: inherit; margin: 0; text-rendering: inherit; }
svg { display: block; flex: none; }
h3 { margin: 0; font-size: 9px; font-weight: 400; color: #1b6f8e; display: flex; align-items: center; }
.tri { display: inline-block; flex: none; width: 5px; height: 3px; background: currentColor; clip-path: polygon(0 0, 100% 0, 50% 100%); }
.tri.upw { clip-path: polygon(0 100%, 100% 100%, 50% 0); width: 6px; }
.tri.right { width: 3px; height: 6px; clip-path: polygon(0 0, 100% 50%, 0 100%); }

.top { background: linear-gradient(90deg, #00678e, #00749e 60%, #04759f); color: #fff; height: 36px; flex: none; }
.titlebar { display: grid; grid-template-columns: 312px 1fr 104px; height: 18px; align-items: center; }
.quick { display: flex; align-items: center; padding-left: 3px; }
.nx { font-size: 14px; line-height: 16px; width: 29px; font-weight: 800; }
.qb { width: 15px; }
.qb svg { width: 11px; height: 11px; }
.dim { color: #2d84a8; }
.undo { margin-left: 7px; }
.redo { margin-left: 7px; }
.cut { margin-left: 6px; }
.cap { margin-left: 3px; }
.quick > .qb + .tri { margin: 0 4px; }
.mic { margin-left: 2px; }
.touch { margin: 0 4px 0 5px; }
.winbtn { gap: 3px; margin-left: 2px; }
.winbtn svg { width: 12px; height: 12px; }
.winbtn .tri { margin-left: 0; }
.over { margin-left: 4px; border-top: 1px solid #fff; padding-top: 1px; display: flex; }
.wintitle { text-align: center; }
.winctl { display: flex; align-items: center; padding-left: 1px; }
.winctl strong { font: bold 9px/12px "Liberation Sans", sans-serif; width: 54px; white-space: nowrap; }
.winctl button { width: 16px; }
.winctl svg { width: 9px; height: 9px; }
.menurow { display: flex; justify-content: space-between; height: 18px; }
.menu { display: grid; grid-template-columns: 40px 48px 42px 51px 64px 52px 40px 55px 50px 41px 66px 72px; font-size: 9px; }
.menu button { border-bottom: 2px solid transparent; height: 17px; padding-top: 3px; }
.menu .active { color: #e2e69a; border-color: #b5d48a; }
.searchrow { display: flex; align-items: center; padding: 0 0 1px; }
.searchrow button { width: 18px; }
.searchrow button svg { width: 11px; height: 11px; }
.search { display: flex; align-items: center; width: 106px; height: 13px; background: #fff; margin-right: 2px; }
.search input { border: 0; outline: 0; background: none; width: 93px; padding: 0 2px; height: 12px; }
.search input::placeholder { color: #999; }
.search svg { width: 11px; height: 11px; }

.ribbon { display: flex; height: 60px; flex: none; border-bottom: 1px solid #dcdcdc; padding-top: 3px; }
.group { flex: none; border-right: 1px solid #dcdcdc; height: 54px; display: flex; flex-direction: column; padding: 1px 0 0 5px; }
.items { display: grid; height: 45px; flex: none; justify-content: start; }
.main { width: 315px; padding-left: 4px; } .main .items { grid-template-columns: 38px 38px 34px 34px 36px 127px; }
.parting { width: 137px; } .parting .items { grid-template-columns: 38px 38px 48px; }
.cooling { width: 121px; } .cooling .items { grid-template-columns: 38px 39px 33px; }
.tools { width: 165px; } .tools .items { grid-template-columns: 38px 30px 26px 32px 34px; }
.valid { width: 142px; } .valid .items { grid-template-columns: 42px 42px 48px; }
.draw { width: 122px; padding-left: 4px; } .draw .items { grid-template-columns: 40px 43px 37px; }
.big { flex-direction: column; justify-content: flex-start; line-height: 9px; }
.big svg { width: 22px; height: 22px; margin-bottom: 2px; }
.big span { display: flex; align-items: center; gap: 2px; min-height: 9px; }
.big .tri, .gtitle .tri { width: 4px; height: 3px; }
.smalls { display: grid; grid-template-columns: 48px 79px; grid-auto-rows: 23px; }
.smalls button { justify-content: flex-start; gap: 3px; height: 19px; }
.smalls svg { width: 16px; height: 16px; }
.gtitle { display: flex; align-items: center; color: #1b6f8e; height: 10px; flex: none; padding-right: 6px; }
.gtitle span { flex: 1; text-align: center; }
.gtitle .tri { color: #222; }
.ribend { margin: 49px 3px 0 auto; width: 4px; }

.work { flex: 1; min-height: 0; display: flex; }
.side { width: 22px; flex: none; background: #d9dbdb; border-right: 1px solid #c2c4c4; display: flex; flex-direction: column; }
.side button { height: 28px; width: 100%; flex: none; padding-left: 2px; }
.side svg { width: 16px; height: 16px; }
.side .on { background: #fff; }
.side .gearbtn { height: 17px; margin-bottom: 10px; padding: 0; color: #444; }
.side .gearbtn svg { width: 11px; height: 11px; }
.side .info { margin-top: 10px; } .side .web { margin-top: 6px; } .side .clock { margin-top: 8px; }

.navigator { width: 230px; flex: none; border-right: 1px solid #d5d8da; padding: 0 6px 4px 4px; display: flex; flex-direction: column; }
.navhead { display: flex; justify-content: space-between; align-items: center; height: 19px; padding: 0 4px 0 2px; }
.navhead button { width: 8px; height: 7px; border: 1px solid #333; border-top-width: 2px; }
.tablewrap { flex: 1; min-height: 0; overflow: hidden; }
table { width: 100%; height: 100%; border-collapse: separate; border-spacing: 0; table-layout: fixed; }
th { background: #efefef; font-weight: 400; text-align: left; padding: 1px 0 0 4px; border: solid #dedede; border-width: 1px 1px 1px 0; }
th:first-child { padding-left: 5px; }
.c2 { width: 24px; } .c3 { width: 17px; }
td { padding: 0; height: 12px; border-bottom: 1px solid #ececec; border-right: 1px solid #ececec; }
td:first-child, th:first-child { border-right: 1px solid #444; }
tbody tr:nth-child(even) { background: #f8f8f8; }
.cell { display: flex; align-items: center; height: 12px; white-space: nowrap; }
.l1 { padding-left: 13px; gap: 2px; } .l2 { padding-left: 14px; gap: 2px; }
.l1 svg { width: 11px; height: 10px; }
.l2 svg { width: 10px; height: 10px; }
.l2 input { appearance: none; width: 9px; height: 9px; border: 1px solid #555; background: #fff; position: relative; }
.l2 input:checked::after { content: ""; position: absolute; left: 2px; top: 0; width: 3px; height: 5px; border: solid #c8102e; border-width: 0 1px 1px 0; transform: rotate(40deg); }
.disk { width: 11px; height: 11px; margin-left: 3px; }
.hscroll { height: 12px; flex: none; background: #f0f0f0; padding: 5px 0 0 12px; }
.hscroll span { display: block; width: 126px; height: 1px; background: #666; }
.splitter { height: 3px; flex: none; background: #d4d4d4; border: solid #aaa; border-width: 1px 0; }
.preview { height: 154px; flex: none; border: 1px solid #ddd; border-top: 0; }
.preview h3, .deps { height: 17px; }
.preview h3 .tri { margin: 0 7px 0 4px; }
.deps .tri { margin: 0 7px 0 6px; }
.pbox { height: 123px; margin: 2px 26px 0 27px; border: 1px solid #ddd; display: grid; place-items: center; }
.deps { flex: none; border-bottom: 1px solid #bbb; padding-top: 2px; }

.center { flex: 1; min-width: 0; display: flex; flex-direction: column; }
.docs { height: 16px; flex: none; display: grid; grid-template-columns: 91px 148px 100px 123px 132px; border-bottom: 1px solid #1f7a9c; }
.docs button { justify-content: flex-start; gap: 2px; padding-left: 4px; min-width: 0; }
.docs button + button { border-left: 1px solid #eee; padding-left: 4px; }
.docs svg { width: 11px; height: 11px; }
.docs svg.sm { width: 8px; height: 8px; margin-left: 2px; }
.docs button.active { background: #005f87; color: #fff; border-color: #005f87; padding-left: 2px; gap: 1px; }
.docs .active svg.sm { width: 7px; height: 7px; margin-left: 1px; }
.viewport { flex: 1; min-height: 0; position: relative; overflow: hidden; border: 1px solid #b98a8a; border-top-color: #444; }
.scene { position: absolute; inset: 0; width: 100%; height: 100%; }
.ax { font: 9px "Liberation Sans", sans-serif; fill: #777; }
.selbar { position: absolute; left: 437px; top: 8px; display: flex; align-items: center; background: #fff; padding: 0 2px 1px 1px; }
.selbar select { appearance: none; width: 95px; height: 13px; border: 1px solid #777; background: #fff; padding: 0 2px; border-radius: 0; }
.selbar .tri { margin-left: -8px; }
.selbar button { margin-left: 10px; font-size: 13px; width: 14px; height: 10px; }
.selbar .out { margin: 8px 0 0 11px; width: 4px; }
.camera { position: absolute; left: 3px; bottom: 1px; font: 9px/12px "Liberation Sans", sans-serif; color: #b9545b; }

.dialog { position: absolute; left: 0; top: 0; width: 197px; background: #f0f0f0; border: solid #d8d8d8; border-width: 0 1px 1px 0; }
.dtitle { height: 16px; background: #005f87; color: #fff; display: flex; align-items: center; font-size: 9px; padding: 0 3px 0 3px; }
.dtitle span { flex: 1; margin-left: 5px; }
.dtitle svg { width: 10px; height: 10px; }
.dtitle button { width: 14px; }
.dtabs { display: grid; grid-template-columns: 43px 34px 37px 51px; margin: 5px 0 0 8px; height: 19px; align-items: end; }
.dtabs button { height: 18px; border: 1px solid #d3d3d3; border-left: 0; padding-top: 1px; }
.dtabs button:first-child { border-left: 1px solid #d3d3d3; }
.dtabs .active { height: 20px; background: #fff; border-bottom: 0; color: #1b6f8e; margin-bottom: -1px; z-index: 1; }
.dbody { margin: 0 7px 0 6px; background: #fff; border: 1px solid #ccc; padding: 0 4px 4px; }
.dbody h3 { height: 18px; }
.dbody h3 .tri { margin: 0 6px 0 3px; }
.dbody h3.ruled { height: 21px; border-top: 1px solid #ccc; }
.define, .assign, .settings { padding: 0 3px 5px 4px; }
.define { padding-top: 3px; }
.rrow { display: flex; height: 16px; align-items: center; }
.rrow span:first-child { flex: 1; }
.num { margin-right: 5px; }
.sw { width: 13px; height: 13px; border: 1px solid #777; }
.cavity { background: #d46a37; } .corec { background: #2e62ca; } .undef { background: #00cdcb; }
.trans { display: block; padding-left: 14px; height: 31px; }
.trans span { display: block; height: 14px; line-height: 14px; }
.trans input { display: block; appearance: none; width: 148px; height: 16px; background: linear-gradient(#aaa, #aaa) 4px 7px / 139px 2px no-repeat; margin-left: 4px; }
.trans input::-webkit-slider-thumb { appearance: none; width: 6px; height: 12px; background: #0d5c7c; border: 1px solid #0a4b66; }
.faces { padding: 1px 0 0 14px; }
.crow { height: 15px; display: flex; align-items: center; justify-content: space-between; }
.crow label { display: flex; align-items: center; gap: 2px; }
.radios label { display: flex; align-items: center; gap: 3px; }
.crow input { appearance: none; width: 9px; height: 9px; border: 1px solid #777; border-radius: 2px; background: #fbfbfb; position: relative; }
.crow input:checked { background: #0a5fa5; border-color: #0a5fa5; }
.crow input:checked::after { content: ""; position: absolute; left: 2px; top: 0; width: 2px; height: 4px; border: solid #fff; border-width: 0 1px 1px 0; transform: rotate(40deg); }
.setcolor { display: flex; align-items: center; justify-content: space-between; margin-top: 4px; }
.setcolor button { width: 22px; height: 22px; border: 1px solid #777; }
.setcolor svg { width: 17px; height: 17px; }
.assign { padding-top: 1px; }
.selface { display: flex; gap: 2px; height: 21px; }
.selface button { background: #fbdf70; }
.selface .sf { flex: 1; justify-content: flex-start; padding: 1px 0 0 1px; gap: 4px; }
.selface .sf svg { width: 9px; height: 10px; }
.fb { width: 21px; }
.fb svg { width: 16px; height: 16px; }
.radios { margin-top: 3px; background: #f0f0f0; border: 1px solid #e6e6e6; padding: 2px 3px; height: 34px; }
.radios label { height: 14px; }
.radios input { appearance: none; width: 9px; height: 9px; border: 1px solid #777; border-radius: 50%; background: #fff; }
.radios input:checked { border: 3px solid #0a5fa5; }
.settings { padding: 0 10px 4px 4px; border-bottom: 1px solid #ccc; }
.plabel { height: 14px; line-height: 14px; }
.focus { outline: 1px dotted #555; }
.collapse { height: 12px; display: flex; align-items: center; justify-content: center; margin: 0 4px; border-bottom: 1px solid #ccc; color: #000; padding-top: 3px; }
.dfoot { display: flex; justify-content: flex-end; gap: 4px; padding: 5px 9px 6px; }
.dfoot button { width: 44px; height: 16px; border: 1px solid #3c7f9b; background: #f6f8f9; color: #1b5f7c; }
.dfoot .primary { background: #005f87; color: #fff; }

.right { width: 24px; flex: none; display: flex; flex-direction: column; padding-top: 6px; }
.right button { height: 21px; }
.right svg { width: 16px; height: 16px; }
.right .tri { margin: auto 0 5px 3px; width: 4px; transform: rotate(90deg); }

.status { height: 16px; flex: none; display: flex; justify-content: space-between; align-items: center; padding: 1px 36px 0 2px; border-top: 1px solid #ccc; border-bottom: 1px solid #1f6a85; color: #000; }
.status svg { width: 10px; height: 10px; margin-right: 3px; }
</style>
